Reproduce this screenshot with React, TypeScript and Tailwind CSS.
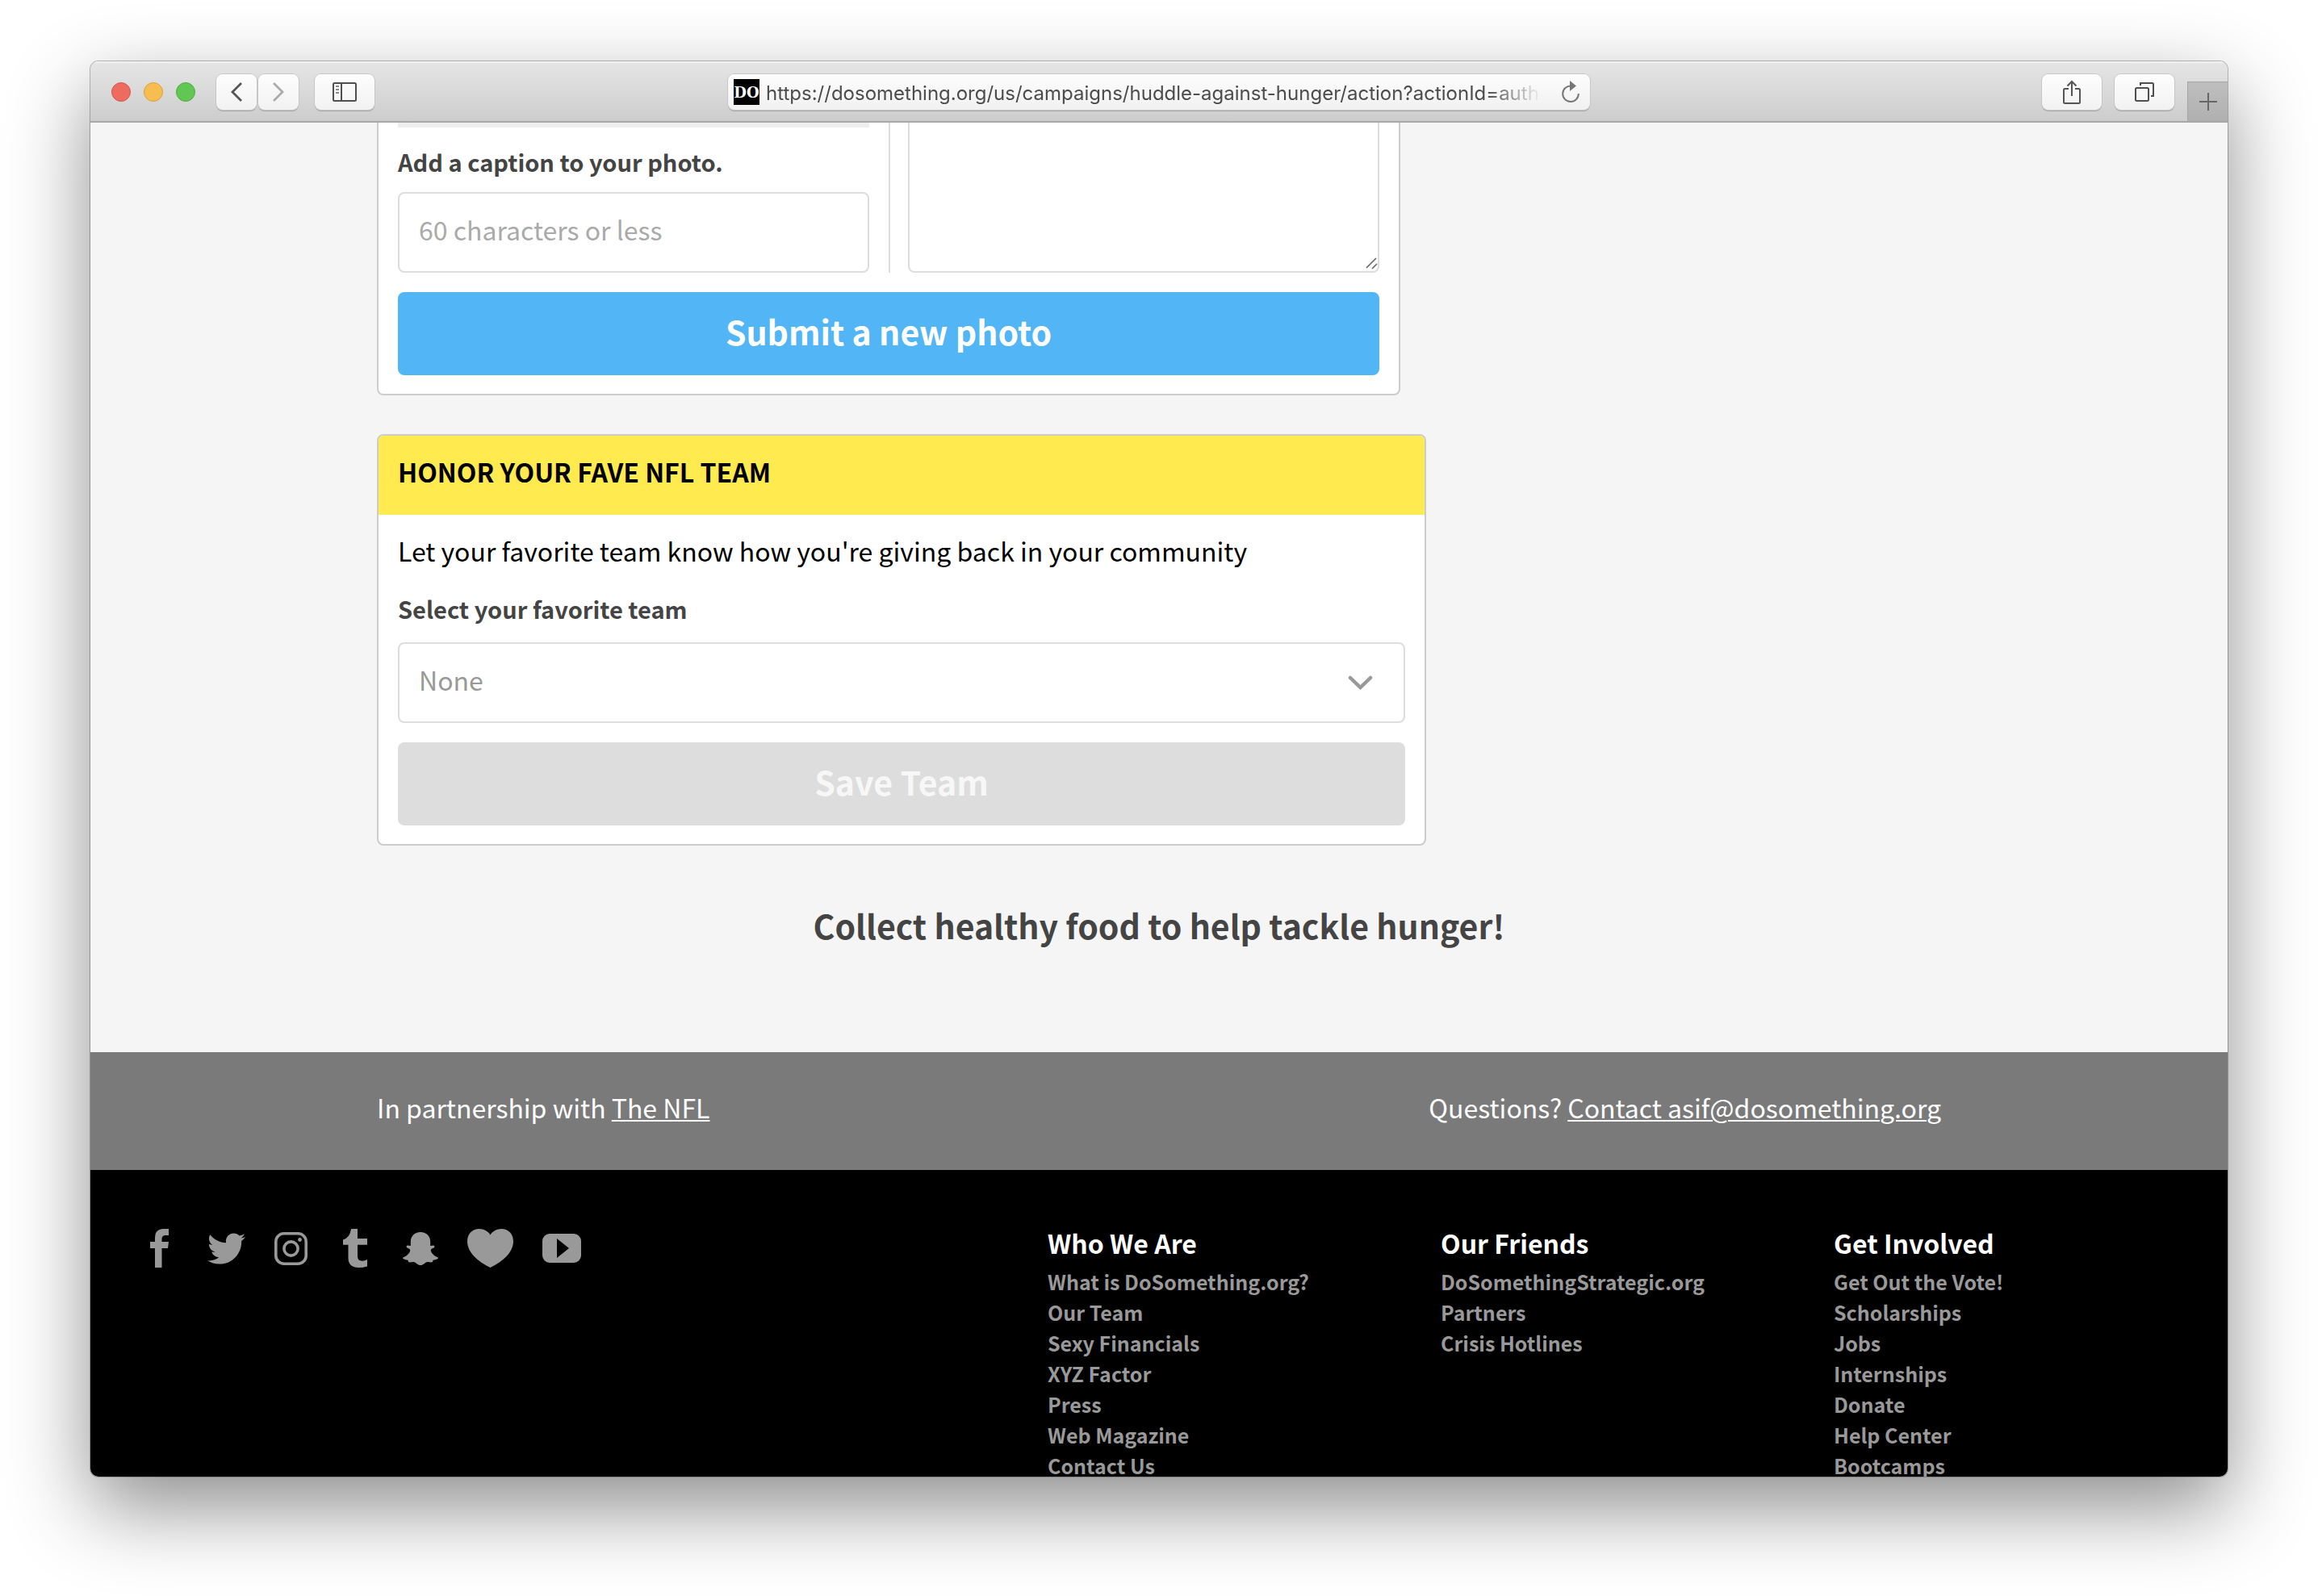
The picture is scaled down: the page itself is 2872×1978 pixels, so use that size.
import type { ReactNode } from "react";
import { FaTwitter } from "react-icons/fa";

function ToolbarButton({ label, className, children }: { label: string; className: string; children: ReactNode }) {
  return (
    <button
      type="button"
      aria-label={label}
      className={`flex h-11 shrink-0 items-center justify-center rounded-lg bg-linear-to-b from-[#fdfdfd] to-[#f2f2f2] shadow-[0_0_0_1px_#c6c6c6,0_2px_1px_#a6a6a6] ${className}`}
    >
      {children}
    </button>
  );
}

function BrowserToolbar() {
  return (
    <header className="grid h-[76px] shrink-0 grid-cols-[1fr_minmax(0,1068px)_1fr] items-start border-b-2 border-[#a8a8a8] bg-linear-to-b from-[#e6e6e6] to-[#cdcdcd] shadow-[inset_0_2px_0_#f1f1f1]">
      <div className="flex items-center pt-4 pl-[26px]">
        <div className="flex gap-4">
          <button type="button" aria-label="Close" className="size-6 rounded-full border border-[#d65449] bg-[#ee6b60]" />
          <button type="button" aria-label="Minimize" className="size-6 rounded-full border border-[#dba03b] bg-[#f6be50]" />
          <button type="button" aria-label="Zoom" className="size-6 rounded-full border border-[#4fac3f] bg-[#62c655]" />
        </div>
        <div className="ml-[26px] flex gap-0.5">
          <ToolbarButton label="Back" className="w-[50px]">
            <svg width="14" height="24" viewBox="0 0 14 24" fill="none" stroke="#555" strokeWidth="2.8">
              <path d="M13 1 2 12l11 11" />
            </svg>
          </ToolbarButton>
          <ToolbarButton label="Forward" className="w-[50px]">
            <svg width="14" height="24" viewBox="0 0 14 24" fill="none" stroke="#ababab" strokeWidth="2.8">
              <path d="m1 1 11 11L1 23" />
            </svg>
          </ToolbarButton>
        </div>
        <ToolbarButton label="Show sidebar" className="ml-5 w-[74px]">
          <svg width="30" height="24" viewBox="0 0 30 24" fill="none" stroke="#4f4f4f" strokeWidth="2">
            <rect x="1" y="1" width="28" height="22" rx="1.5" />
            <path d="M11 1v22" />
            <path d="M4 5h4M4 9h4M4 13h4" stroke="#8a8a8a" />
          </svg>
        </ToolbarButton>
      </div>

      <div className="mt-4 flex h-11 items-center rounded-lg bg-linear-to-b from-[#fdfdfd] to-[#f1f1f1] pr-3 pl-[7px] shadow-[0_0_0_1px_#c6c6c6,0_2px_1px_#a6a6a6]">
        <span className="flex size-8 shrink-0 items-center justify-center bg-black font-['DejaVu_Serif',serif] text-[18px] font-bold text-white">
          DO
        </span>
        <input
          readOnly
          aria-label="Address"
          value="https://dosomething.org/us/campaigns/huddle-against-hunger/action?actionId=auth%20"
          className="ml-2 h-11 min-w-0 flex-1 bg-transparent pt-0.5 font-[Inter,sans-serif] text-[24px] text-[#4c4c4c] outline-none [mask-image:linear-gradient(to_right,black_93%,transparent_100%)]"
        />
        <button type="button" aria-label="Reload" className="ml-6 shrink-0">
          <svg width="24" height="28" viewBox="0 0 24 28" fill="none" stroke="#777" strokeWidth="2">
            <path d="M13 6.5A9.8 9.8 0 1 0 21.800 16" />
            <path d="M11 0v13l8-6.500z" fill="#777" stroke="none" />
          </svg>
        </button>
      </div>

      <div className="flex h-full items-start justify-end gap-4">
        <ToolbarButton label="Share" className="mt-4 w-[74px]">
          <svg width="24" height="30" viewBox="0 0 24 30" fill="none" stroke="#555" strokeWidth="2">
            <path d="M8 11H3.500A1.500 1.500 0 0 0 2 12.500v15A1.500 1.500 0 0 0 3.500 29h17a1.500 1.500 0 0 0 1.500-1.500v-15a1.500 1.500 0 0 0-1.500-1.500H16" />
            <path d="M12 20V2M6.500 7.500 12 2l5.500 5.500" />
          </svg>
        </ToolbarButton>
        <ToolbarButton label="Show all tabs" className="mt-4 w-[74px]">
          <svg width="24" height="24" viewBox="0 0 24 24" fill="none" stroke="#4f4f4f" strokeWidth="2">
            <rect x="1" y="7" width="16" height="16" rx="1.500" />
            <path d="M7 4V1h14.500A1.500 1.500 0 0 1 23 2.500V17h-3" />
          </svg>
        </ToolbarButton>
        <button
          type="button"
          aria-label="New tab"
          className="flex h-[49px] w-[50px] items-center justify-center self-end border-t border-l border-[#a5a5a5] bg-linear-to-b from-[#bebebe] to-[#b0b0b0]"
        >
          <svg width="22" height="22" viewBox="0 0 22 22" stroke="#666" strokeWidth="2">
            <path d="M11 0v22M0 11h22" />
          </svg>
        </button>
      </div>
    </header>
  );
}

function PhotoForm() {
  return (
    <form className="w-full max-w-[1268px] rounded-b-lg border-2 border-t-0 border-[#ccc] bg-white px-6 pb-[23px]">
      <div className="flex">
        <div className="flex-1 pr-6">
          <div className="h-1.5 bg-[#eee]" />
          <label htmlFor="caption" className="mt-[22px] mb-[18px] block text-[29px] leading-10 font-bold text-[#444]">
            Add a caption to your photo.
          </label>
          <input
            id="caption"
            type="text"
            placeholder="60 characters or less"
            className="block h-[100px] w-full rounded-lg border-2 border-[#ddd] px-6 pb-2 text-[32px] placeholder:text-[#aaa]"
          />
        </div>
        <div className="relative flex-1 border-l-2 border-[#ddd] pl-[22px]">
          <textarea
            aria-label="Why is this important to you?"
            className="block h-full w-full resize-none rounded-b-lg border-2 border-t-0 border-[#ddd] p-6 text-[32px]"
          />
          <svg className="absolute right-0.5 bottom-1" width="15" height="15" viewBox="0 0 15 15" stroke="#666" strokeWidth="1.600">
            <path d="M1 13 13 1M8 14l6-6" />
          </svg>
        </div>
      </div>
      <button type="button" className="mt-6 block h-[103px] w-full rounded-lg bg-[#52b5f5] pb-1.5 text-[41px] font-bold text-white">
        Submit a new photo
      </button>
    </form>
  );
}

function TeamForm() {
  return (
    <form className="mt-12 w-full max-w-[1300px] overflow-hidden rounded-lg border-2 border-[#ccc] bg-white">
      <h2 className="bg-[#ffea4f] px-6 pt-6 pb-[34px] text-[32px] leading-10 font-bold text-black">HONOR YOUR FAVE NFL TEAM</h2>
      <div className="px-6 pt-6 pb-[23px]">
        <p className="text-[32px] leading-10 text-black">
          Let your favorite team know how you're giving back in your community
        </p>
        <label htmlFor="team" className="mt-8 mb-[22px] block text-[29px] leading-10 font-bold text-[#444]">
          Select your favorite team
        </label>
        <div className="relative">
          <select
            id="team"
            defaultValue="none"
            className="block h-[100px] w-full appearance-none rounded-lg border-2 border-[#ddd] bg-white px-6 pb-2 text-[32px] text-[#999]"
          >
            <option value="none">None</option>
          </select>
          <svg
            className="pointer-events-none absolute top-[41px] right-10"
            width="31"
            height="18"
            viewBox="0 0 31 18"
            fill="none"
            stroke="#999"
            strokeWidth="4.500"
            strokeLinecap="round"
          >
            <path d="m3 3 12.500 12L28 3" />
          </svg>
        </div>
        <button type="button" disabled className="mt-6 block h-[103px] w-full rounded-lg bg-[#ddd] pb-1.5 text-[41px] font-bold text-[#f7f7f7]">
          Save Team
        </button>
      </div>
    </form>
  );
}

const socialLinks: { label: string; icon: ReactNode }[] = [
  {
    label: "Facebook",
    icon: (
      <svg width="47" height="48" viewBox="-12 0 47 48" fill="currentColor">
        <path d="M23 0v8h-4q-4.500 0-4.500 4.500V16H23l-1 8h-7.500v24H6V24H0v-8h6v-5Q6 0 17 0z" />
      </svg>
    ),
  },
  { label: "Twitter", icon: <FaTwitter className="h-[47px] w-[47px]" /> },
  {
    label: "Instagram",
    icon: (
      <svg width="41" height="41" viewBox="0 0 41 41" fill="none" stroke="currentColor" strokeWidth="3.600">
        <rect x="1.800" y="1.800" width="37.400" height="37.400" rx="10" />
        <circle cx="20.500" cy="20.500" r="8.600" />
        <circle cx="31.500" cy="9.500" r="2.400" fill="currentColor" stroke="none" />
      </svg>
    ),
  },
  {
    label: "Tumblr",
    icon: (
      <svg width="46" height="48" viewBox="-8 0 46 48" fill="currentColor">
        <path d="M10 0h8v12h12v7.800H18V34q0 5 4.500 5.600 4 .4 7.500-1.600v8.500Q25 48 19.500 48 6.500 48 6.500 36V19.800H0V13.500Q8.500 11 10 0z" />
      </svg>
    ),
  },
  {
    label: "Snapchat",
    icon: (
      <svg width="44" height="41" viewBox="0 0 44 41" fill="currentColor">
        <path d="M22 0c-7.500 0-12.200 5-12.200 12v5c-1.300.4-2.500-.6-3.800-.4-1.700.3-1.900 2-.5 2.800 1.500.9 3.500 1 3.700 2.600C9.500 25.500 5 30 .8 31.200c-1 .4-1 1.500.2 2.100 1.600.9 3.600 1 5.400 1.400.6.700.2 2.400 1.300 2.600 2 .4 4.300-.6 6.600-.1C16.900 37.900 18.500 41 22 41s5.100-3.100 7.700-3.800c2.300-.5 4.600.5 6.600.1 1.100-.2.700-1.900 1.300-2.600 1.800-.4 3.800-.5 5.400-1.400 1.200-.6 1.200-1.700.2-2.100C39 30 34.500 25.500 34.800 22c.2-1.600 2.200-1.700 3.700-2.600 1.400-.8 1.200-2.500-.5-2.800-1.300-.2-2.500.8-3.800.4v-5C34.200 5 29.500 0 22 0z" />
      </svg>
    ),
  },
  {
    label: "Favorites",
    icon: (
      <svg width="57" height="48" viewBox="0 0 57 48" fill="currentColor">
        <path d="M28.500 48C13 40.500 0 29 0 15.500 0 6 6.500 0 14.500 0 21 0 26.500 3.500 28.500 7.500 30.500 3.500 36 0 42.500 0 50.500 0 57 6 57 15.500 57 29 44 40.500 28.500 48z" />
      </svg>
    ),
  },
  {
    label: "YouTube",
    icon: (
      <svg width="48" height="36" viewBox="0 0 48 36" fill="currentColor">
        <path fillRule="evenodd" d="M9 0h30a9 9 0 0 1 9 9v18a9 9 0 0 1-9 9H9a9 9 0 0 1-9-9V9a9 9 0 0 1 9-9zM18 6v24l15-12z" />
      </svg>
    ),
  },
];

const footerColumns = [
  {
    title: "Who We Are",
    links: ["What is DoSomething.org?", "Our Team", "Sexy Financials", "XYZ Factor", "Press", "Web Magazine", "Contact Us"],
  },
  { title: "Our Friends", links: ["DoSomethingStrategic.org", "Partners", "Crisis Hotlines"] },
  {
    title: "Get Involved",
    links: ["Get Out the Vote!", "Scholarships", "Jobs", "Internships", "Donate", "Help Center", "Bootcamps"],
  },
];

function SiteFooter() {
  return (
    <footer className="grid flex-1 grid-cols-[1186fr_487fr_487fr_488fr] bg-black pt-[70px]">
      <nav aria-label="Social media" className="flex h-[54px] items-center gap-9 pl-[62px] text-[#999]">
        {socialLinks.map((link) => (
          <a key={link.label} href="#" aria-label={link.label}>
            {link.icon}
          </a>
        ))}
      </nav>
      {footerColumns.map((column) => (
        <nav key={column.title} aria-label={column.title}>
          <h4 className="mb-[9px] text-[32px] leading-10 font-bold text-white">{column.title}</h4>
          <ul>
            {column.links.map((link) => (
              <li key={link} className="text-[25px] leading-[38px] font-bold text-[#999]">
                <a href="#">{link}</a>
              </li>
            ))}
          </ul>
        </nav>
      ))}
    </footer>
  );
}

export default function App() {
  return (
    <div className="flex h-screen flex-col bg-white px-28 pt-19 pb-37">
      <div className="flex min-h-0 flex-1 flex-col overflow-hidden rounded-[10px] bg-[#f5f5f5] font-['Noto_Sans_CJK_SC','Noto_Sans',sans-serif] shadow-[0_0_0_1px_rgba(0,0,0,0.25),0_38px_100px_rgba(0,0,0,0.45)]">
        <BrowserToolbar />
        <div className="flex min-h-0 flex-1 flex-col overflow-hidden">
          <main className="mx-auto w-full max-w-[1938px] shrink-0">
            <PhotoForm />
            <TeamForm />
            <h3 className="mt-[68px] mb-32 text-center text-[41px] leading-[60px] font-bold text-[#444]">
              Collect healthy food to help tackle hunger!
            </h3>
          </main>
          <section className="shrink-0 bg-[#7a7a7a] pt-12 pb-[58px] text-[32px] leading-10 text-white">
            <div className="mx-auto flex w-full max-w-[1938px] justify-between">
              <p>
                In partnership with <a href="#" className="underline decoration-2 underline-offset-2">The NFL</a>
              </p>
              <p>
                Questions? <a href="#" className="underline decoration-2 underline-offset-2">Contact asif@dosomething.org</a>
              </p>
            </div>
          </section>
          <SiteFooter />
        </div>
      </div>
    </div>
  );
}
